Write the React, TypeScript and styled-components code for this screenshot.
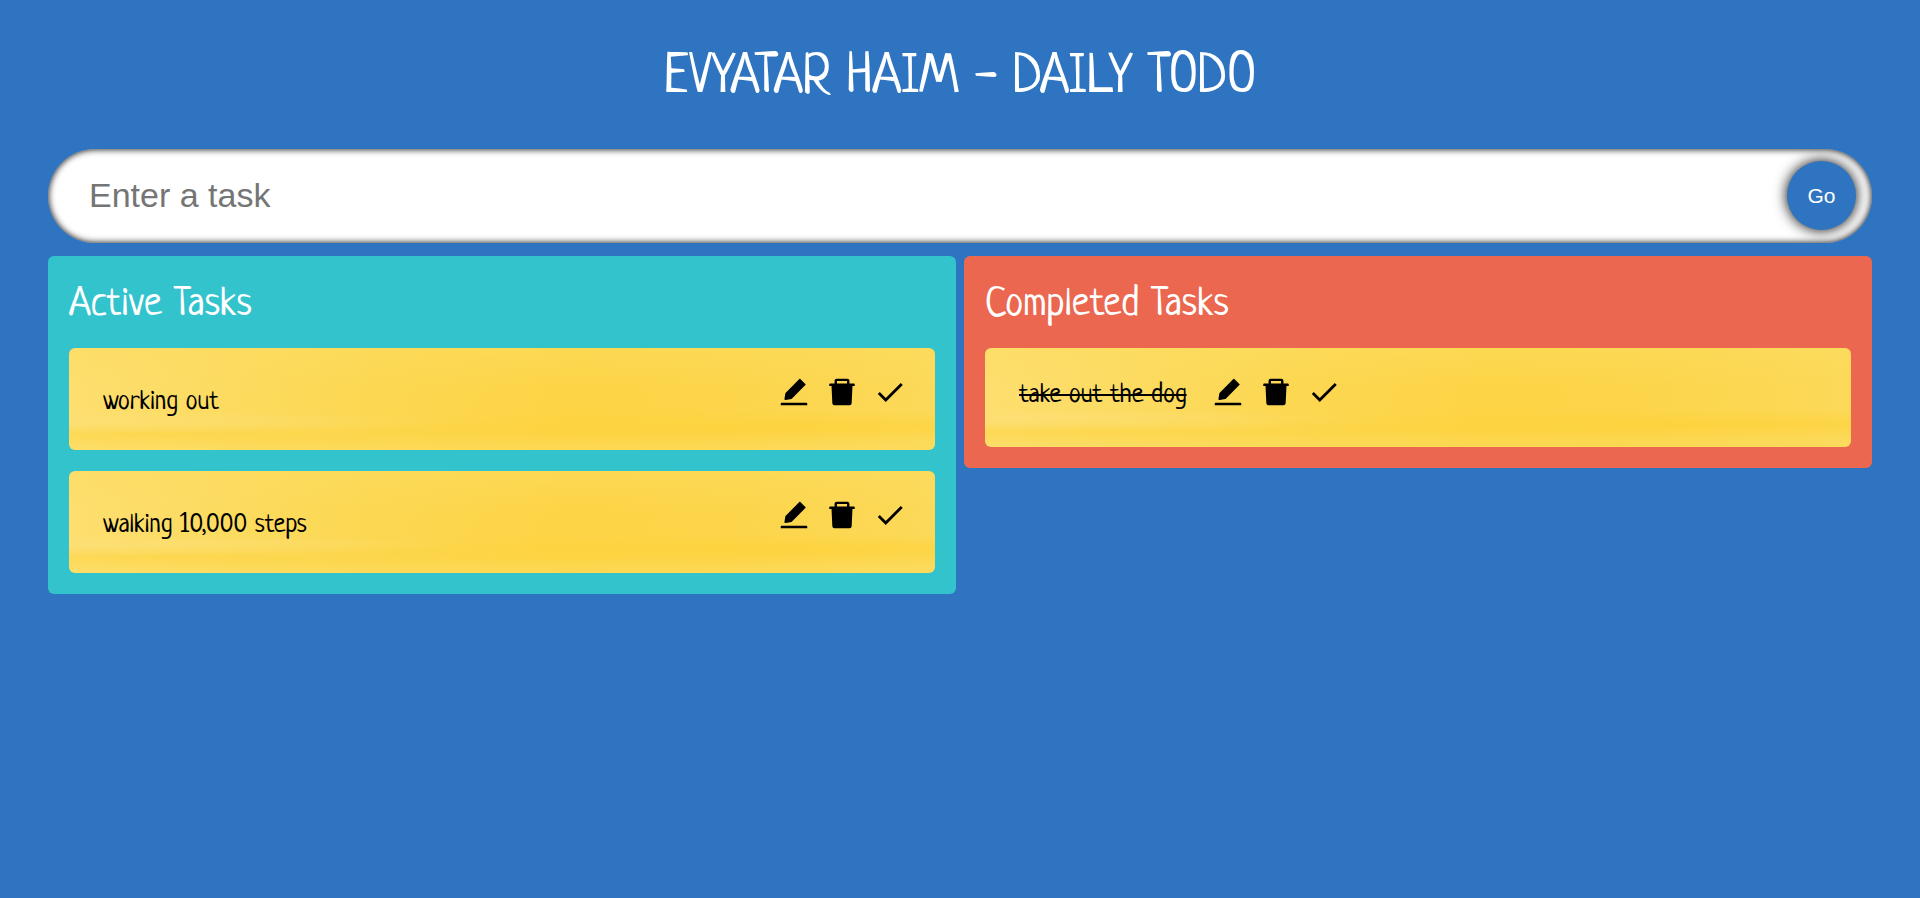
import React, { useState } from 'react';
import styled, { createGlobalStyle, css } from 'styled-components';
import { AiFillDelete, AiFillEdit } from 'react-icons/ai';
import { MdDone } from 'react-icons/md';

const GlobalStyle = createGlobalStyle`
  * {
    box-sizing: border-box;
  }
  body {
    margin: 0;
    background: #2f74c0;
    font-family: Neucha, sans-serif;
  }
`;

const Page = styled.main`
  display: flex;
  flex-direction: column;
  align-items: center;
  min-height: 100vh;
  background: #2f74c0;
`;

const Title = styled.h1`
  margin: 45px 0 35px;
  color: #fff;
  font-size: 55px;
  font-weight: 400;
  line-height: 69px;
  text-align: center;
  text-transform: uppercase;
`;

const TaskForm = styled.form`
  position: relative;
  display: flex;
  align-items: center;
  width: 95%;
`;

const TaskInput = styled.input`
  width: 100%;
  height: 94px;
  padding: 0 104px 2px 41px;
  border: 0;
  border-radius: 47px;
  background: #fff;
  box-shadow: inset 0 0 7px #000;
  color: #000;
  font-family: 'Liberation Sans', Arial, sans-serif;
  font-size: 34px;

  &::placeholder {
    color: #757575;
    opacity: 1;
  }
`;

/* Clips the button's glow to the rounded end of the input. */
const ButtonClip = styled.div`
  position: absolute;
  inset: 0;
  display: flex;
  align-items: flex-start;
  justify-content: flex-end;
  padding: 12px 16px;
  border-radius: 47px;
  overflow: hidden;
  pointer-events: none;
`;

const GoButton = styled.button`
  width: 69px;
  height: 69px;
  padding: 0;
  border: 0;
  border-radius: 50%;
  background: #2f74c0;
  box-shadow: 0 0 14px #000;
  color: #fff;
  font-family: 'Liberation Sans', Arial, sans-serif;
  font-size: 21px;
  cursor: pointer;
  pointer-events: auto;
`;

const Board = styled.div`
  display: grid;
  grid-template-columns: 1fr 1fr;
  align-items: start;
  gap: 8px;
  width: 95%;
  margin-top: 13px;
`;

const Column = styled.section<{ $color: string }>`
  display: flex;
  flex-direction: column;
  gap: 21px;
  padding: 27px 21px 21px;
  border-radius: 6px;
  background: ${({ $color }) => $color};
`;

const ColumnTitle = styled.h2`
  margin: 0;
  color: #fff;
  font-size: 41px;
  font-weight: 400;
  line-height: 44px;
`;

const Card = styled.article<{ $done: boolean }>`
  display: flex;
  align-items: flex-start;
  gap: 24px;
  min-height: ${({ $done }) => ($done ? '99px' : '102px')};
  padding: 27px 28px 27px 34px;
  border-radius: 6px;
  background-color: #fcd64b;
  background-image:
    radial-gradient(ellipse 45% 12% at 0% 73%, rgba(252, 224, 120, 0.7), transparent),
    radial-gradient(ellipse 55% 14% at 10% 84%, rgba(253, 211, 62, 0.6), transparent),
    radial-gradient(ellipse 55% 16% at 85% 77%, rgba(253, 210, 56, 0.7), transparent),
    linear-gradient(180deg, rgba(252, 220, 96, 0.5) 0%, transparent 40%, transparent 84%, rgba(252, 220, 96, 0.5) 100%),
    linear-gradient(97deg, #fddf70 0%, #fcdb60 18%, #fcd751 36%, #fdd445 58%, #fcd54a 76%, #fcd95a 100%);
`;

const TaskText = styled.span<{ $done: boolean }>`
  color: #000;
  font-size: 27px;
  line-height: 41px;
  ${({ $done }) =>
    $done
      ? css`
          text-decoration: line-through;
        `
      : css`
          flex: 1;
          align-self: flex-end;
        `}
`;

const Actions = styled.div`
  display: flex;
  gap: 14px;
`;

const IconButton = styled.button`
  display: flex;
  padding: 0;
  border: 0;
  background: none;
  color: #000;
  font-size: 34px;
  cursor: pointer;
`;

type Task = { id: number; text: string; done: boolean };

const initialTasks: Task[] = [
  { id: 1, text: 'working out', done: false },
  { id: 2, text: 'walking 10,000 steps', done: false },
  { id: 3, text: 'take out the dog', done: true },
];

export default function App() {
  const [tasks, setTasks] = useState(initialTasks);
  const [draft, setDraft] = useState('');

  const addTask = (event: React.FormEvent) => {
    event.preventDefault();
    if (!draft.trim()) return;
    setTasks([...tasks, { id: Date.now(), text: draft, done: false }]);
    setDraft('');
  };

  const removeTask = (id: number) => setTasks(tasks.filter(task => task.id !== id));

  const editTask = (task: Task) => {
    setDraft(task.text);
    removeTask(task.id);
  };

  const toggleTask = (id: number) =>
    setTasks(tasks.map(task => (task.id === id ? { ...task, done: !task.done } : task)));

  const renderCards = (done: boolean) =>
    tasks
      .filter(task => task.done === done)
      .map(task => (
        <Card key={task.id} $done={done}>
          <TaskText $done={done}>{task.text}</TaskText>
          <Actions>
            <IconButton type="button" aria-label="Edit" onClick={() => editTask(task)}>
              <AiFillEdit />
            </IconButton>
            <IconButton type="button" aria-label="Delete" onClick={() => removeTask(task.id)}>
              <AiFillDelete />
            </IconButton>
            <IconButton type="button" aria-label="Done" onClick={() => toggleTask(task.id)}>
              <MdDone />
            </IconButton>
          </Actions>
        </Card>
      ));

  return (
    <>
      <GlobalStyle />
      <Page>
        <Title>Evyatar Haim - Daily Todo</Title>
        <TaskForm onSubmit={addTask}>
          <TaskInput
            aria-label="Task"
            placeholder="Enter a task"
            value={draft}
            onChange={event => setDraft(event.target.value)}
          />
          <ButtonClip>
            <GoButton type="submit">Go</GoButton>
          </ButtonClip>
        </TaskForm>
        <Board>
          <Column $color="#32c3cd">
            <ColumnTitle>Active Tasks</ColumnTitle>
            {renderCards(false)}
          </Column>
          <Column $color="#eb6750">
            <ColumnTitle>Completed Tasks</ColumnTitle>
            {renderCards(true)}
          </Column>
        </Board>
      </Page>
    </>
  );
}
